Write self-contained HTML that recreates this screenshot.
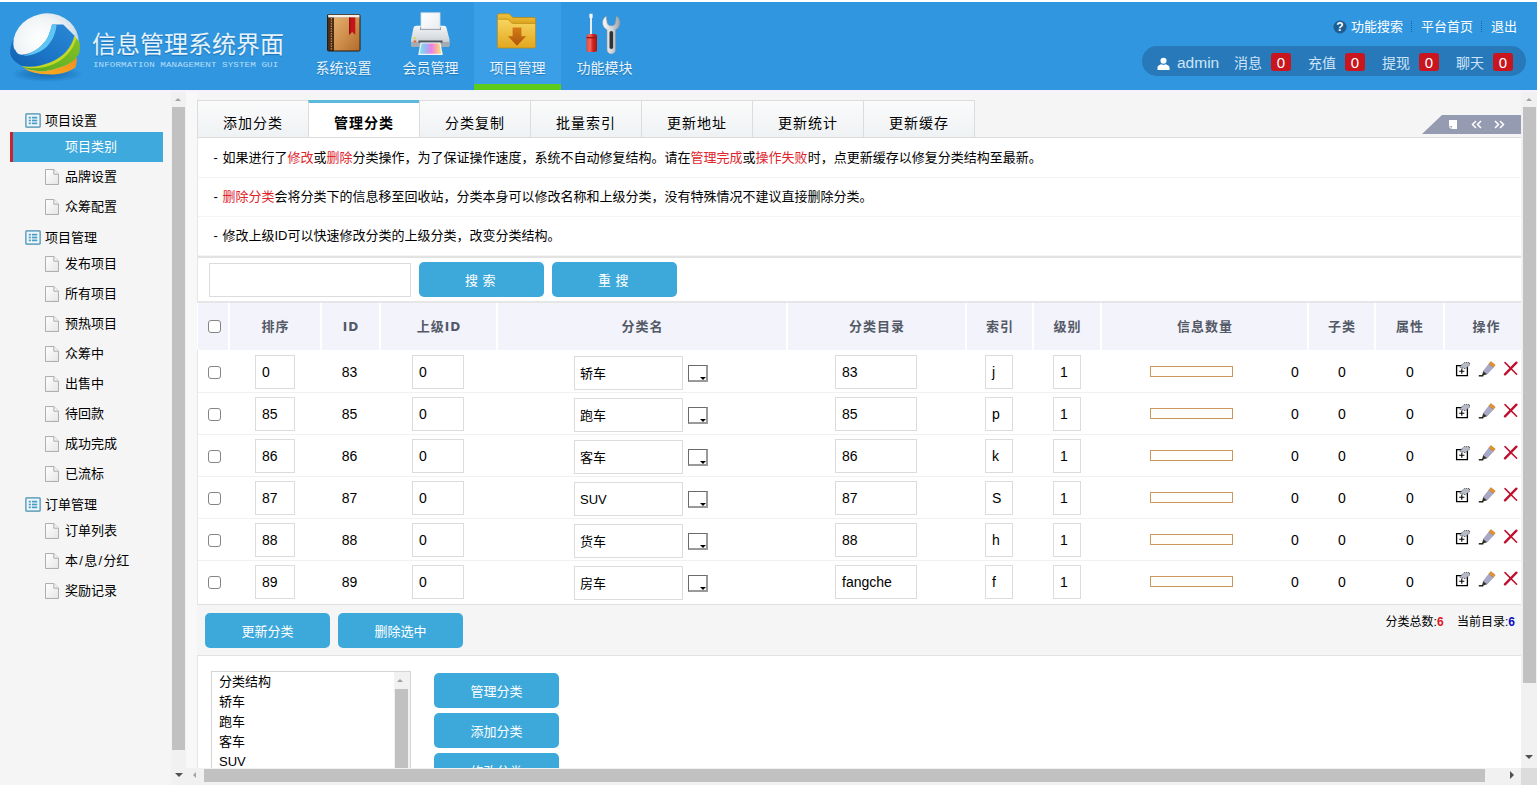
<!DOCTYPE html>
<html lang="zh-CN">
<head>
<meta charset="utf-8">
<title>信息管理系统界面</title>
<style>
*{box-sizing:border-box;margin:0;padding:0}
html,body{width:1537px;height:785px;overflow:hidden;background:#f5f5f5}
body{position:relative;font-family:"Liberation Sans","Noto Sans CJK SC",sans-serif;font-size:13px;color:#000}
.abs{position:absolute}
#hd{position:absolute;left:0;top:0;width:1537px;height:90px;background:#2f96df;border-top:2px solid #fff;overflow:hidden}
#strip{position:absolute;left:0;top:90px;width:1537px;height:2px;background:#f4f3fb}
#hd .title{position:absolute;left:92px;top:27px;font-size:24px;line-height:32px;color:#e6f3fd;font-weight:400;text-shadow:0 1px 1px rgba(20,90,150,.6);white-space:nowrap}
#hd .sub{position:absolute;left:93px;top:60px;font-family:"Liberation Mono","DejaVu Sans Mono",monospace;font-size:9.200px;line-height:10px;color:#b9def8;letter-spacing:.1px;white-space:nowrap;transform:scale(1,.74);transform-origin:0 0}
.nav{position:absolute;top:0;width:87px;height:88px;color:#eaf5fd;font-size:14px}
.nav span{position:absolute;left:0;width:87px;top:56px;line-height:20px;text-align:center;text-shadow:0 1px 1px rgba(20,90,150,.5)}
.nav.on{background:#3a9fe6}
.nav.on:after{content:"";position:absolute;left:0;bottom:0;width:87px;height:6px;background:#5ccb1b}
.nav svg{position:absolute}
.tl{position:absolute;top:16px;font-size:13px;line-height:18px;color:#fff;white-space:nowrap}
.sep{position:absolute;top:19px;width:0;height:11px;border-left:1px dotted #1b639e}
#pill{position:absolute;left:1142px;top:44px;width:384px;height:30px;border-radius:15px;background:#2779ba}
#pill .t{position:absolute;top:7px;line-height:20px;font-size:14px;color:#cfe5f7;white-space:nowrap}
#pill .b{position:absolute;top:7px;width:20px;height:18px;border-radius:3px;background:#c9151e;color:#fff;font-size:15px;line-height:19px;text-align:center}

#side{position:absolute;left:0;top:92px;width:186px;height:693px;background:#f5f5f5}
.gh{position:absolute;left:45px;font-size:13px;line-height:20px;color:#000;white-space:nowrap}
.gi{position:absolute;left:25px}
.it{position:absolute;left:65px;font-size:13px;line-height:20px;color:#000;white-space:nowrap}
.pi{position:absolute;left:45px}
#act{position:absolute;left:10px;top:132px;width:153px;height:30px;background:#3da9dc;border-left:3px solid #c9232d}
.sbt{position:absolute;background:#f1f1f1}
.sbth{position:absolute;background:#c1c1c1}
.au,.ad,.al,.ar{position:absolute;width:0;height:0;border:3.500px solid transparent}
.au{border-bottom:3.500px solid #a3a3a3;border-top:0}
.ad{border:4px solid transparent;border-top:4px solid #505050;border-bottom:0}
.al{border-right:3.500px solid #a3a3a3;border-left:0}
.ar{border:4px solid transparent;border-left:4px solid #505050;border-right:0}

#gap{position:absolute;left:186px;top:92px;width:11px;height:693px;background:#f8f8f8}
#main{position:absolute;left:197px;top:92px;width:1324px;height:676px;background:#f5f5f5;overflow:hidden}
#main .in{position:absolute;left:0;top:-92px;width:1324px;height:785px}
/* everything inside .in uses page coords minus 197 on x */
.tab{position:absolute;top:100px;width:112px;height:38px;border:1px solid #dcdcdc;background:linear-gradient(#fafbfb,#eff2f4);font-size:14px;letter-spacing:1px;line-height:20px;text-align:center;padding-top:12px;color:#000}
.tab.on{background:#fff;border-top:3px solid #5bb9dd;border-bottom-color:#fff;font-weight:bold;padding-top:10px}
#info{position:absolute;left:0;top:137px;width:1324px;height:120px;background:#fff;border-top:1px solid #dcdcdc;border-left:1px solid #e6e6e6}
.ir{position:absolute;left:0;width:1324px;height:39px;line-height:38px;padding-left:15.500px;font-size:13px;color:#000;white-space:nowrap;border-bottom:1px solid #f4f4f4}
.ir i{font-style:normal;color:#e0242c}
.ir u{text-decoration:none;display:inline-block;width:9px}
#srow{position:absolute;left:0;top:256px;width:1324px;height:47px;background:#fff;border-top:2px solid #e2e2e2;border-bottom:2px solid #e6e6e6;border-left:1px solid #e6e6e6}
.inp{position:absolute;background:#fff;border:1px solid #dcdcdc;font-size:13px;line-height:33px;padding-left:6px;color:#000;white-space:nowrap;overflow:hidden}
.btn{position:absolute;width:125px;height:35px;border-radius:5px;background:#3da9db;color:#fff;font-size:13px;line-height:37px;text-align:center;white-space:nowrap}
#thead{position:absolute;left:0;top:303px;width:1324px;height:47px;background:#fff}
.th{position:absolute;top:0;height:47px;background:#f3f3fc;font-size:13px;font-weight:bold;letter-spacing:1px;color:#535a66;text-align:center;line-height:48px;padding-left:1px}
#tbody{position:absolute;left:0;top:350px;width:1324px;height:255px;background:#fff;border-left:1px solid #e6e6e6;border-bottom:1px solid #e0e0e0}
.tr{position:absolute;left:0;width:1324px;height:43px;border-bottom:1px solid #f1f1f1}
.tr.last{border-bottom:0}
.td{position:absolute;font-size:14px;line-height:20px;color:#000;white-space:nowrap}
.cb{position:absolute;width:13px;height:13px;border:1px solid #858585;border-radius:3px;background:#fff}
.bar{position:absolute;width:83px;height:11px;border:1px solid #c8985c;background:#fffefb}
.sty{position:absolute;width:20px;height:17px;background:#fff;border-top:1px solid #6a6a6a;border-left:1px solid #6a6a6a;border-right:2px solid #9a9a9a;border-bottom:2px solid #9a9a9a}
.sty:after{content:"";position:absolute;right:0;bottom:0;width:0;height:0;border:3px solid transparent;border-top:3px solid #000;border-bottom:0}
#foot{position:absolute;left:0;top:605px;width:1324px;height:51px;background:#f5f5f5;border-bottom:1px solid #e2e2e2}
#bot{position:absolute;left:0;top:656px;width:1324px;height:120px;background:#fff;border-left:1px solid #e6e6e6}
.opt{position:absolute;left:7px;font-size:13px;line-height:20px;white-space:nowrap}
</style>
</head>
<body>
<div id="hd">
<svg class="abs" style="left:5px;top:5px" width="82" height="78" viewBox="0 0 82 78">
<defs>
<radialGradient id="lg1" cx="42%" cy="40%" r="62%"><stop offset="0" stop-color="#ffffff"/><stop offset=".55" stop-color="#f1f4f6"/><stop offset=".85" stop-color="#d5e3ec"/><stop offset="1" stop-color="#a9cbe3"/></radialGradient>
<linearGradient id="lg2" x1="1" y1="0" x2="0" y2="1"><stop offset="0" stop-color="#2a88d6"/><stop offset=".6" stop-color="#1b74c6"/><stop offset="1" stop-color="#135fae"/></linearGradient>
<linearGradient id="lg3" x1="0" y1="1" x2="1" y2="0"><stop offset="0" stop-color="#55aa22"/><stop offset="1" stop-color="#86c226"/></linearGradient>
<linearGradient id="lg4" x1="0" y1="1" x2="1" y2="0"><stop offset="0" stop-color="#f6b024"/><stop offset="1" stop-color="#f78c1c"/></linearGradient>
<radialGradient id="lgs" cx="50%" cy="50%" r="50%"><stop offset="0" stop-color="#0f5aa0" stop-opacity=".7"/><stop offset=".6" stop-color="#0f5aa0" stop-opacity=".35"/><stop offset="1" stop-color="#0f5aa0" stop-opacity="0"/></radialGradient>
</defs>
<ellipse cx="42" cy="67" rx="36" ry="8" fill="url(#lgs)"/>
<ellipse cx="41" cy="36.500" rx="33" ry="30" fill="url(#lg1)" transform="rotate(-12 41 36.500)"/>
<path d="M 71.5,50.0 L 71.8,51.5 C 71.8,55.0 71.2,58.0 70.4,60.2 C 64.0,65.0 55.0,67.5 46.0,67.5 C 39.0,67.5 33.0,66.7 28.6,65.5 C 24.0,64.2 21.0,62.6 18.4,60.4 C 22.0,62.0 27.0,63.5 33.7,64.3 C 39.0,64.5 45.0,63.5 52.0,61.2 C 60.0,59.5 67.0,56.0 71.5,50.0 Z" fill="url(#lg4)"/>
<path d="M 69.4,28.6 L 70.4,30.6 L 74.5,34.7 C 75.2,39.0 75.0,43.0 74.0,46.9 L 71.5,50.0 C 67.0,56.0 60.0,59.5 52.0,61.2 C 45.0,63.5 39.0,64.5 33.7,64.3 C 27.0,63.5 22.0,62.0 18.4,60.2 L 17.4,59.0 C 25.0,60.5 35.0,59.5 45.0,55.5 C 57.0,51.0 67.0,41.0 69.4,28.6 Z" fill="url(#lg3)"/>
<path d="M 69.4,28.6 L 71.3,31.5 C 68.5,43.5 58.5,53.5 46.5,58.0 C 36.5,61.5 26.5,62.0 18.4,60.2 L 17.4,59.0 C 25.0,60.5 35.0,59.5 45.0,55.5 C 57.0,51.0 67.0,41.0 69.4,28.6 Z" fill="#c3d821"/>
<path d="M 47.0,17.4 L 58.2,17.4 L 69.4,28.6 C 67.0,41.0 57.0,51.0 45.0,55.5 C 35.0,59.5 25.0,60.5 17.4,59.0 C 9.0,55.0 4.5,49.0 5.2,43.9 C 5.5,39.0 6.5,35.5 8.3,32.7 C 7.8,39.0 9.0,42.0 10.3,42.9 C 12.0,47.0 15.0,48.2 19.0,47.6 C 25.0,46.8 31.0,43.5 35.0,40.0 C 40.0,35.5 43.0,31.0 44.5,26.0 C 45.5,23.0 46.5,20.0 47.0,17.4 Z" fill="url(#lg2)"/>
<path d="M 47.0,17.4 L 51.5,17.8 C 51.0,26.0 47.5,34.0 41.5,40.0 C 35.0,45.5 27.0,49.0 18.0,49.0 C 25.0,47.0 31.0,43.5 35.0,40.0 C 40.0,35.5 43.0,31.0 44.5,26.0 C 45.5,23.0 46.5,20.0 47.0,17.4 Z" fill="#5ec6f4"/>
</svg>
<div class="title">信息管理系统界面</div>
<div class="sub">INFORMATION MANAGEMENT SYSTEM GUI</div>
<div class="nav" style="left:300px"><svg style="left:26px;top:11px" width="36" height="40" viewBox="0 0 36 40">
<defs><linearGradient id="bk1" x1="0" y1="0" x2="1" y2="1"><stop offset="0" stop-color="#e3ad6c"/><stop offset=".5" stop-color="#cf8f4c"/><stop offset="1" stop-color="#b06c2c"/></linearGradient></defs>
<rect x="1" y="1" width="33.500" height="37.500" rx="2" fill="#2b1a0d"/>
<rect x="2.200" y="1.800" width="31.300" height="3" fill="#f7f3ea"/>
<rect x="8" y="4.500" width="25.500" height="33" fill="url(#bk1)"/>
<rect x="2" y="4.500" width="6" height="33" fill="#4d2e15"/>
<path d="M5.300 5 v32" stroke="#c9a36e" stroke-width="1" stroke-dasharray="1.500 1"/>
<path d="M23 4.500 h6.300 v17.200 l-3.150 -2.600 l-3.150 2.600z" fill="#c4141a"/>
<path d="M23 4.500 h1.500 v16 l-1.500 1.200z" fill="#9e0d12"/>
</svg><span>系统设置</span></div>
<div class="nav" style="left:387px"><svg style="left:21px;top:8px" width="46" height="48" viewBox="0 0 46 48">
<defs>
<linearGradient id="pr1" x1="0" y1="0" x2="0" y2="1"><stop offset="0" stop-color="#f3f5f6"/><stop offset=".55" stop-color="#d9dde1"/><stop offset="1" stop-color="#b4bbc2"/></linearGradient>
<linearGradient id="pr2" x1="0" y1="0" x2="1" y2="0"><stop offset="0" stop-color="#7fe3ee"/><stop offset=".3" stop-color="#9fb4f2"/><stop offset=".55" stop-color="#f07fe6"/><stop offset=".8" stop-color="#f6b6a0"/><stop offset="1" stop-color="#f3e77c"/></linearGradient>
<linearGradient id="pr3" x1="0" y1="0" x2="1" y2="1"><stop offset="0" stop-color="#ffffff"/><stop offset="1" stop-color="#e9edf0"/></linearGradient>
</defs>
<path d="M8 15.800 h28 a2.500 2.500 0 0 1 2.400 1.800 l3.100 12 v5.400 a2 2 0 0 1 -2 2 h-34.500 a2 2 0 0 1 -2 -2 v-5.400 l2.600 -12 a2.500 2.500 0 0 1 2.400 -1.800z" fill="url(#pr1)"/>
<path d="M3 32 h38.500 v3 a2 2 0 0 1 -2 2 h-34.500 a2 2 0 0 1 -2 -2z" fill="#a3abb3"/>
<rect x="12" y="17" width="21" height="3" fill="#7d868e"/>
<rect x="13" y="2.800" width="19" height="16.200" fill="url(#pr3)" stroke="#d5dbe0" stroke-width=".8"/>
<rect x="10.500" y="30.500" width="24" height="2.200" fill="#4e565d"/>
<path d="M12.500 32.500 h20 l2.300 12.500 h-24.600z" fill="#f1f4f6"/>
<path d="M13.600 33.500 h17.800 l1.900 10.300 h-21.600z" fill="url(#pr2)"/>
<rect x="5.600" y="27.300" width="2.600" height="1.800" fill="#d8d840"/>
<rect x="5.600" y="30.500" width="2.600" height="1.800" fill="#f0602a"/>
</svg><span>会员管理</span></div>
<div class="nav on" style="left:474px"><svg style="left:22px;top:10px" width="42" height="38" viewBox="0 0 42 38">
<defs>
<linearGradient id="fd1" x1="0" y1="0" x2="0" y2="1"><stop offset="0" stop-color="#f8d560"/><stop offset="1" stop-color="#e2a71f"/></linearGradient>
<linearGradient id="fd0" x1="0" y1="0" x2="0" y2="1"><stop offset="0" stop-color="#f2c33c"/><stop offset="1" stop-color="#d89f1c"/></linearGradient>
<linearGradient id="fd2" x1="0" y1="0" x2="0" y2="1"><stop offset="0" stop-color="#d47c18"/><stop offset="1" stop-color="#b0560a"/></linearGradient>
</defs>
<path d="M1.500 3.300 a1.500 1.500 0 0 1 1.500 -1.500 h9.500 c2 0 3 3.700 5 3.700 h20.500 a1.500 1.500 0 0 1 1.500 1.500 v6 h-38z" fill="url(#fd0)" stroke="#b98a17" stroke-width=".8"/>
<path d="M1.500 8 c0 -.5 .5 -.8 1 -.8 h8.500 c2.500 0 3.500 4.200 6 4.200 h21 c1 0 1.500 .5 1.500 1.300 v21.800 a1.500 1.500 0 0 1 -1.500 1.500 h-35 a1.500 1.500 0 0 1 -1.500 -1.500z" fill="url(#fd1)" stroke="#bf8f18" stroke-width=".8"/>
<path d="M16.600 15.400 h8.800 v8.800 h4.700 l-9.100 9.600 l-9.100 -9.600 h4.700z" fill="url(#fd2)"/>
</svg><span>项目管理</span></div>
<div class="nav" style="left:561px"><svg style="left:23px;top:10px" width="40" height="42" viewBox="0 0 40 42">
<defs>
<linearGradient id="tl1" x1="0" y1="0" x2="1" y2="0"><stop offset="0" stop-color="#e8453c"/><stop offset=".35" stop-color="#f06a5e"/><stop offset=".6" stop-color="#d3241f"/><stop offset="1" stop-color="#a31512"/></linearGradient>
<linearGradient id="tl2" x1="0" y1="0" x2="1" y2="0"><stop offset="0" stop-color="#fafbfb"/><stop offset=".5" stop-color="#d3d8dc"/><stop offset="1" stop-color="#9aa2a9"/></linearGradient>
</defs>
<rect x="6" y="2" width="2" height="21" fill="#e9edf0"/>
<path d="M5.400 1.800 h3.200 v3.400 l-.6 1 h-2 l-.6 -1z" fill="#f4f6f7"/>
<rect x="2.500" y="22" width="10.500" height="18" rx="2.500" fill="url(#tl1)"/>
<rect x="2.500" y="25" width="10.500" height="1.300" fill="#9a1512"/>
<path d="M22.200 4 c-3 2 -4.200 5 -3.400 8.500 c.6 2.600 2.200 4.300 4.200 5.200 v20 a4.300 4.300 0 0 0 8.600 0 v-20 c2 -.9 3.600 -2.600 4.200 -5.200 c.8 -3.500 -.4 -6.500 -3.400 -8.500 l-1 6.800 c-.5 2 -1.700 3 -4.100 3 s-3.600 -1 -4.100 -3z" fill="url(#tl2)" stroke="#8b949b" stroke-width=".6"/>
<rect x="25.500" y="19" width="3.600" height="18" rx="1.800" fill="#2e3338"/>
</svg><span>功能模块</span></div>
<svg class="abs" style="left:1333px;top:18px" width="14" height="14" viewBox="0 0 14 14"><circle cx="7" cy="7" r="6.500" fill="#1e5c92"/><text x="7" y="11" font-family="Liberation Sans, sans-serif" font-size="12" font-weight="bold" fill="#fff" text-anchor="middle">?</text></svg>
<div class="tl" style="left:1351px">功能搜索</div>
<div class="sep" style="left:1411px"></div>
<div class="tl" style="left:1421px">平台首页</div>
<div class="sep" style="left:1481px"></div>
<div class="tl" style="left:1491px">退出</div>
<div id="pill">
<svg class="abs" style="left:14.500px;top:10.500px" width="13" height="13" viewBox="0 0 14 14"><circle cx="7" cy="4" r="3.300" fill="#fff"/><path d="M0.500 14 v-2.500 c0 -2.500 3 -3.500 4.500 -3.800 c1 .8 3 .8 4 0 c1.500 .3 4.500 1.300 4.500 3.800 v2.500z" fill="#fff"/></svg>
<div class="t" style="left:35px;font-size:15.500px;top:6.500px">admin</div>
<div class="t" style="left:92px">消息</div>
<div class="b" style="left:129px">0</div>
<div class="t" style="left:166px">充值</div>
<div class="b" style="left:203px">0</div>
<div class="t" style="left:240px">提现</div>
<div class="b" style="left:277px">0</div>
<div class="t" style="left:314px">聊天</div>
<div class="b" style="left:351px">0</div>
</div>
</div>
<div id="strip"></div>
<div id="side"></div>
<div class="sbt" style="left:171px;top:92px;width:15px;height:693px"></div>
<div class="sbth" style="left:172px;top:107px;width:13px;height:643px"></div>
<div class="au" style="left:175px;top:97.500px"></div>
<div class="ad" style="left:174.500px;top:773px"></div>
<div id="act"></div>
<svg class="gi" style="top:113px" width="16" height="15" viewBox="0 0 15 14"><rect x=".75" y=".75" width="13.500" height="12.500" rx="1.500" fill="#eef7fb" stroke="#74a9c4" stroke-width="1.700"/><rect x="3.500" y="3.500" width="2" height="1.600" fill="#4a9cc6"/><rect x="6.500" y="3.500" width="5" height="1.600" fill="#4a9cc6"/><rect x="3.500" y="6.200" width="2" height="1.600" fill="#4a9cc6"/><rect x="6.500" y="6.200" width="5" height="1.600" fill="#4a9cc6"/><rect x="3.500" y="8.900" width="2" height="1.600" fill="#4a9cc6"/><rect x="6.500" y="8.900" width="5" height="1.600" fill="#4a9cc6"/></svg>
<div class="gh" style="top:111px">项目设置</div>
<svg class="gi" style="top:230px" width="16" height="15" viewBox="0 0 15 14"><rect x=".75" y=".75" width="13.500" height="12.500" rx="1.500" fill="#eef7fb" stroke="#74a9c4" stroke-width="1.700"/><rect x="3.500" y="3.500" width="2" height="1.600" fill="#4a9cc6"/><rect x="6.500" y="3.500" width="5" height="1.600" fill="#4a9cc6"/><rect x="3.500" y="6.200" width="2" height="1.600" fill="#4a9cc6"/><rect x="6.500" y="6.200" width="5" height="1.600" fill="#4a9cc6"/><rect x="3.500" y="8.900" width="2" height="1.600" fill="#4a9cc6"/><rect x="6.500" y="8.900" width="5" height="1.600" fill="#4a9cc6"/></svg>
<div class="gh" style="top:228px">项目管理</div>
<svg class="gi" style="top:497px" width="16" height="15" viewBox="0 0 15 14"><rect x=".75" y=".75" width="13.500" height="12.500" rx="1.500" fill="#eef7fb" stroke="#74a9c4" stroke-width="1.700"/><rect x="3.500" y="3.500" width="2" height="1.600" fill="#4a9cc6"/><rect x="6.500" y="3.500" width="5" height="1.600" fill="#4a9cc6"/><rect x="3.500" y="6.200" width="2" height="1.600" fill="#4a9cc6"/><rect x="6.500" y="6.200" width="5" height="1.600" fill="#4a9cc6"/><rect x="3.500" y="8.900" width="2" height="1.600" fill="#4a9cc6"/><rect x="6.500" y="8.900" width="5" height="1.600" fill="#4a9cc6"/></svg>
<div class="gh" style="top:495px">订单管理</div>
<div class="it" style="top:137px;color:#fff">项目类别</div>
<svg class="pi" style="top:169px" width="14" height="16" viewBox="0 0 15 17"><defs><linearGradient id="pg1" x1="0" y1="0" x2="1" y2="1"><stop offset="0" stop-color="#ffffff"/><stop offset="1" stop-color="#e6e6e6"/></linearGradient></defs><path d="M.500 .500 h9 l5 5 v11 h-14z" fill="url(#pg1)" stroke="#a6a6a6" stroke-width="1"/><path d="M9.500 .500 v5 h5" fill="#f4f4f4" stroke="#a6a6a6" stroke-width="1"/></svg>
<div class="it" style="top:167px">品牌设置</div>
<svg class="pi" style="top:199px" width="14" height="16" viewBox="0 0 15 17"><defs><linearGradient id="pg2" x1="0" y1="0" x2="1" y2="1"><stop offset="0" stop-color="#ffffff"/><stop offset="1" stop-color="#e6e6e6"/></linearGradient></defs><path d="M.500 .500 h9 l5 5 v11 h-14z" fill="url(#pg2)" stroke="#a6a6a6" stroke-width="1"/><path d="M9.500 .500 v5 h5" fill="#f4f4f4" stroke="#a6a6a6" stroke-width="1"/></svg>
<div class="it" style="top:197px">众筹配置</div>
<svg class="pi" style="top:256px" width="14" height="16" viewBox="0 0 15 17"><defs><linearGradient id="pg3" x1="0" y1="0" x2="1" y2="1"><stop offset="0" stop-color="#ffffff"/><stop offset="1" stop-color="#e6e6e6"/></linearGradient></defs><path d="M.500 .500 h9 l5 5 v11 h-14z" fill="url(#pg3)" stroke="#a6a6a6" stroke-width="1"/><path d="M9.500 .500 v5 h5" fill="#f4f4f4" stroke="#a6a6a6" stroke-width="1"/></svg>
<div class="it" style="top:254px">发布项目</div>
<svg class="pi" style="top:286px" width="14" height="16" viewBox="0 0 15 17"><defs><linearGradient id="pg4" x1="0" y1="0" x2="1" y2="1"><stop offset="0" stop-color="#ffffff"/><stop offset="1" stop-color="#e6e6e6"/></linearGradient></defs><path d="M.500 .500 h9 l5 5 v11 h-14z" fill="url(#pg4)" stroke="#a6a6a6" stroke-width="1"/><path d="M9.500 .500 v5 h5" fill="#f4f4f4" stroke="#a6a6a6" stroke-width="1"/></svg>
<div class="it" style="top:284px">所有项目</div>
<svg class="pi" style="top:316px" width="14" height="16" viewBox="0 0 15 17"><defs><linearGradient id="pg5" x1="0" y1="0" x2="1" y2="1"><stop offset="0" stop-color="#ffffff"/><stop offset="1" stop-color="#e6e6e6"/></linearGradient></defs><path d="M.500 .500 h9 l5 5 v11 h-14z" fill="url(#pg5)" stroke="#a6a6a6" stroke-width="1"/><path d="M9.500 .500 v5 h5" fill="#f4f4f4" stroke="#a6a6a6" stroke-width="1"/></svg>
<div class="it" style="top:314px">预热项目</div>
<svg class="pi" style="top:346px" width="14" height="16" viewBox="0 0 15 17"><defs><linearGradient id="pg6" x1="0" y1="0" x2="1" y2="1"><stop offset="0" stop-color="#ffffff"/><stop offset="1" stop-color="#e6e6e6"/></linearGradient></defs><path d="M.500 .500 h9 l5 5 v11 h-14z" fill="url(#pg6)" stroke="#a6a6a6" stroke-width="1"/><path d="M9.500 .500 v5 h5" fill="#f4f4f4" stroke="#a6a6a6" stroke-width="1"/></svg>
<div class="it" style="top:344px">众筹中</div>
<svg class="pi" style="top:376px" width="14" height="16" viewBox="0 0 15 17"><defs><linearGradient id="pg7" x1="0" y1="0" x2="1" y2="1"><stop offset="0" stop-color="#ffffff"/><stop offset="1" stop-color="#e6e6e6"/></linearGradient></defs><path d="M.500 .500 h9 l5 5 v11 h-14z" fill="url(#pg7)" stroke="#a6a6a6" stroke-width="1"/><path d="M9.500 .500 v5 h5" fill="#f4f4f4" stroke="#a6a6a6" stroke-width="1"/></svg>
<div class="it" style="top:374px">出售中</div>
<svg class="pi" style="top:406px" width="14" height="16" viewBox="0 0 15 17"><defs><linearGradient id="pg8" x1="0" y1="0" x2="1" y2="1"><stop offset="0" stop-color="#ffffff"/><stop offset="1" stop-color="#e6e6e6"/></linearGradient></defs><path d="M.500 .500 h9 l5 5 v11 h-14z" fill="url(#pg8)" stroke="#a6a6a6" stroke-width="1"/><path d="M9.500 .500 v5 h5" fill="#f4f4f4" stroke="#a6a6a6" stroke-width="1"/></svg>
<div class="it" style="top:404px">待回款</div>
<svg class="pi" style="top:436px" width="14" height="16" viewBox="0 0 15 17"><defs><linearGradient id="pg9" x1="0" y1="0" x2="1" y2="1"><stop offset="0" stop-color="#ffffff"/><stop offset="1" stop-color="#e6e6e6"/></linearGradient></defs><path d="M.500 .500 h9 l5 5 v11 h-14z" fill="url(#pg9)" stroke="#a6a6a6" stroke-width="1"/><path d="M9.500 .500 v5 h5" fill="#f4f4f4" stroke="#a6a6a6" stroke-width="1"/></svg>
<div class="it" style="top:434px">成功完成</div>
<svg class="pi" style="top:466px" width="14" height="16" viewBox="0 0 15 17"><defs><linearGradient id="pg10" x1="0" y1="0" x2="1" y2="1"><stop offset="0" stop-color="#ffffff"/><stop offset="1" stop-color="#e6e6e6"/></linearGradient></defs><path d="M.500 .500 h9 l5 5 v11 h-14z" fill="url(#pg10)" stroke="#a6a6a6" stroke-width="1"/><path d="M9.500 .500 v5 h5" fill="#f4f4f4" stroke="#a6a6a6" stroke-width="1"/></svg>
<div class="it" style="top:464px">已流标</div>
<svg class="pi" style="top:523px" width="14" height="16" viewBox="0 0 15 17"><defs><linearGradient id="pg11" x1="0" y1="0" x2="1" y2="1"><stop offset="0" stop-color="#ffffff"/><stop offset="1" stop-color="#e6e6e6"/></linearGradient></defs><path d="M.500 .500 h9 l5 5 v11 h-14z" fill="url(#pg11)" stroke="#a6a6a6" stroke-width="1"/><path d="M9.500 .500 v5 h5" fill="#f4f4f4" stroke="#a6a6a6" stroke-width="1"/></svg>
<div class="it" style="top:521px">订单列表</div>
<svg class="pi" style="top:553px" width="14" height="16" viewBox="0 0 15 17"><defs><linearGradient id="pg12" x1="0" y1="0" x2="1" y2="1"><stop offset="0" stop-color="#ffffff"/><stop offset="1" stop-color="#e6e6e6"/></linearGradient></defs><path d="M.500 .500 h9 l5 5 v11 h-14z" fill="url(#pg12)" stroke="#a6a6a6" stroke-width="1"/><path d="M9.500 .500 v5 h5" fill="#f4f4f4" stroke="#a6a6a6" stroke-width="1"/></svg>
<div class="it" style="top:551px">本<span style="padding:0 1.250px">/</span>息<span style="padding:0 1.250px">/</span>分红</div>
<svg class="pi" style="top:583px" width="14" height="16" viewBox="0 0 15 17"><defs><linearGradient id="pg13" x1="0" y1="0" x2="1" y2="1"><stop offset="0" stop-color="#ffffff"/><stop offset="1" stop-color="#e6e6e6"/></linearGradient></defs><path d="M.500 .500 h9 l5 5 v11 h-14z" fill="url(#pg13)" stroke="#a6a6a6" stroke-width="1"/><path d="M9.500 .500 v5 h5" fill="#f4f4f4" stroke="#a6a6a6" stroke-width="1"/></svg>
<div class="it" style="top:581px">奖励记录</div>
<div id="gap"></div>
<div id="main"><div class="in">
<div class="tab" style="left:0px">添加分类</div>
<div class="tab on" style="left:111px">管理分类</div>
<div class="tab" style="left:222px">分类复制</div>
<div class="tab" style="left:333px">批量索引</div>
<div class="tab" style="left:444px">更新地址</div>
<div class="tab" style="left:555px">更新统计</div>
<div class="tab" style="left:666px">更新缓存</div>
<svg class="abs" style="left:1225px;top:115px" width="100" height="19" viewBox="0 0 100 19"><path d="M0 19 L20 0 H98 a2 2 0 0 1 2 2 V19z" fill="#959cb1"/><path d="M27 5 h8 v9 h-5 v-3 h-3z" fill="#fff"/><path d="M27 12 h2 v2" fill="none" stroke="#fff" stroke-width="1"/><path d="M54 6 l-3.500 3.500 l3.500 3.500 M59 6 l-3.500 3.500 l3.500 3.500" fill="none" stroke="#fff" stroke-width="1.500"/><path d="M73 6 l3.500 3.500 l-3.500 3.500 M78 6 l3.500 3.500 l-3.500 3.500" fill="none" stroke="#fff" stroke-width="1.500"/></svg>
<div id="info">
<div class="ir" style="top:1px"><u>-</u>如果进行了<i>修改</i>或<i>删除</i>分类操作，为了保证操作速度，系统不自动修复结构。请在<i>管理完成</i>或<i>操作失败</i>时，点更新缓存以修复分类结构至最新。</div>
<div class="ir" style="top:40px"><u>-</u><i>删除分类</i>会将分类下的信息移至回收站，分类本身可以修改名称和上级分类，没有特殊情况不建议直接删除分类。</div>
<div class="ir" style="top:79px"><u>-</u>修改上级ID可以快速修改分类的上级分类，改变分类结构。</div>
</div>
<div id="srow"></div>
<div class="inp" style="left:12px;top:263px;width:202px;height:34px"></div>
<div class="btn" style="left:222px;top:262px;letter-spacing:4.600px;padding-left:2px">搜索</div>
<div class="btn" style="left:355px;top:262px;letter-spacing:4.600px;padding-left:2px">重搜</div>
<div id="thead">
<div class="th" style="left:1px;width:30px"></div>
<div class="th" style="left:33px;width:90px">排序</div>
<div class="th" style="left:125px;width:57px"><span style="font-family:DejaVu Sans,sans-serif;font-size:12px">ID</span></div>
<div class="th" style="left:184px;width:115px">上级<span style="font-family:DejaVu Sans,sans-serif;font-size:12px">ID</span></div>
<div class="th" style="left:301px;width:288px">分类名</div>
<div class="th" style="left:591px;width:177px">分类目录</div>
<div class="th" style="left:770px;width:65px">索引</div>
<div class="th" style="left:837px;width:66px">级别</div>
<div class="th" style="left:905px;width:205px">信息数量</div>
<div class="th" style="left:1112px;width:65px">子类</div>
<div class="th" style="left:1179px;width:67px">属性</div>
<div class="th" style="left:1248px;width:82px">操作</div>
<div class="cb" style="left:11px;top:17px"></div>
</div>
<div id="tbody">
<div class="tr" style="top:0px">
<div class="cb" style="left:10px;top:16px"></div>
<div class="inp" style="left:57px;top:5px;width:40px;height:34px;font-size:14px">0</div>
<div class="td" style="left:123px;top:12px;width:57px;text-align:center">83</div>
<div class="inp" style="left:214px;top:5px;width:52px;height:34px;font-size:14px">0</div>
<div class="inp" style="left:376px;top:6px;width:109px;height:34px;font-size:13px;line-height:33px;padding-left:5px">轿车</div>
<div class="sty" style="left:490px;top:15px"></div>
<div class="inp" style="left:637px;top:5px;width:82px;height:34px;font-size:14px">83</div>
<div class="inp" style="left:787px;top:5px;width:28px;height:34px;font-size:14px">j</div>
<div class="inp" style="left:855px;top:5px;width:28px;height:34px;font-size:14px">1</div>
<div class="bar" style="left:952px;top:16px"></div>
<div class="td" style="left:1087px;top:12px;width:20px;text-align:center">0</div>
<div class="td" style="left:1134px;top:12px;width:20px;text-align:center">0</div>
<div class="td" style="left:1202px;top:12px;width:20px;text-align:center">0</div>
<svg class="abs" style="left:1257px;top:11px" width="16" height="16" viewBox="0 0 16 16"><path d="M1.600 4.600 h10.800 v10 h-10.800z" fill="#fff" stroke="#000" stroke-width="1.300"/><path d="M4.500 6 L9.300 1.600 h5.200 v2.600 l-4 3.600z" fill="#b7bac8" stroke="#3c3c3c" stroke-width=".8" stroke-dasharray="1.200 .800"/><path d="M6.800 7.600 v5.200 M4.200 10.200 h5.200" stroke="#000" stroke-width="1.100" fill="none"/></svg>
<svg class="abs" style="left:1280px;top:11px" width="18" height="16" viewBox="0 0 18 16"><path d="M12.800 .600 L17.200 3.900 L15.200 6.500 L10.800 3.200z" fill="#e8922a" stroke="#a86a18" stroke-width=".5"/><path d="M10.800 3.200 L15.200 6.500 L9 13.200 L5.200 10.300z" fill="#a8a8c8" stroke="#8686a6" stroke-width=".5"/><path d="M5.200 10.300 L9 13.200 L3.800 15z" fill="#33331f"/><path d="M.800 14.800 h4.500" stroke="#111" stroke-width="1.400"/></svg>
<svg class="abs" style="left:1305px;top:11px" width="15" height="15" viewBox="0 0 15 15"><path d="M2 1.600 L13.600 13.200" stroke="#be0f2d" stroke-width="1.500" stroke-linecap="round"/><path d="M13.400 1.600 L2 13.400" stroke="#be0f2d" stroke-width="2.300" stroke-linecap="round"/></svg>
</div>
<div class="tr" style="top:42px">
<div class="cb" style="left:10px;top:16px"></div>
<div class="inp" style="left:57px;top:5px;width:40px;height:34px;font-size:14px">85</div>
<div class="td" style="left:123px;top:12px;width:57px;text-align:center">85</div>
<div class="inp" style="left:214px;top:5px;width:52px;height:34px;font-size:14px">0</div>
<div class="inp" style="left:376px;top:6px;width:109px;height:34px;font-size:13px;line-height:33px;padding-left:5px">跑车</div>
<div class="sty" style="left:490px;top:15px"></div>
<div class="inp" style="left:637px;top:5px;width:82px;height:34px;font-size:14px">85</div>
<div class="inp" style="left:787px;top:5px;width:28px;height:34px;font-size:14px">p</div>
<div class="inp" style="left:855px;top:5px;width:28px;height:34px;font-size:14px">1</div>
<div class="bar" style="left:952px;top:16px"></div>
<div class="td" style="left:1087px;top:12px;width:20px;text-align:center">0</div>
<div class="td" style="left:1134px;top:12px;width:20px;text-align:center">0</div>
<div class="td" style="left:1202px;top:12px;width:20px;text-align:center">0</div>
<svg class="abs" style="left:1257px;top:11px" width="16" height="16" viewBox="0 0 16 16"><path d="M1.600 4.600 h10.800 v10 h-10.800z" fill="#fff" stroke="#000" stroke-width="1.300"/><path d="M4.500 6 L9.300 1.600 h5.200 v2.600 l-4 3.600z" fill="#b7bac8" stroke="#3c3c3c" stroke-width=".8" stroke-dasharray="1.200 .800"/><path d="M6.800 7.600 v5.200 M4.200 10.200 h5.200" stroke="#000" stroke-width="1.100" fill="none"/></svg>
<svg class="abs" style="left:1280px;top:11px" width="18" height="16" viewBox="0 0 18 16"><path d="M12.800 .600 L17.200 3.900 L15.200 6.500 L10.800 3.200z" fill="#e8922a" stroke="#a86a18" stroke-width=".5"/><path d="M10.800 3.200 L15.200 6.500 L9 13.200 L5.200 10.300z" fill="#a8a8c8" stroke="#8686a6" stroke-width=".5"/><path d="M5.200 10.300 L9 13.200 L3.800 15z" fill="#33331f"/><path d="M.800 14.800 h4.500" stroke="#111" stroke-width="1.400"/></svg>
<svg class="abs" style="left:1305px;top:11px" width="15" height="15" viewBox="0 0 15 15"><path d="M2 1.600 L13.600 13.200" stroke="#be0f2d" stroke-width="1.500" stroke-linecap="round"/><path d="M13.400 1.600 L2 13.400" stroke="#be0f2d" stroke-width="2.300" stroke-linecap="round"/></svg>
</div>
<div class="tr" style="top:84px">
<div class="cb" style="left:10px;top:16px"></div>
<div class="inp" style="left:57px;top:5px;width:40px;height:34px;font-size:14px">86</div>
<div class="td" style="left:123px;top:12px;width:57px;text-align:center">86</div>
<div class="inp" style="left:214px;top:5px;width:52px;height:34px;font-size:14px">0</div>
<div class="inp" style="left:376px;top:6px;width:109px;height:34px;font-size:13px;line-height:33px;padding-left:5px">客车</div>
<div class="sty" style="left:490px;top:15px"></div>
<div class="inp" style="left:637px;top:5px;width:82px;height:34px;font-size:14px">86</div>
<div class="inp" style="left:787px;top:5px;width:28px;height:34px;font-size:14px">k</div>
<div class="inp" style="left:855px;top:5px;width:28px;height:34px;font-size:14px">1</div>
<div class="bar" style="left:952px;top:16px"></div>
<div class="td" style="left:1087px;top:12px;width:20px;text-align:center">0</div>
<div class="td" style="left:1134px;top:12px;width:20px;text-align:center">0</div>
<div class="td" style="left:1202px;top:12px;width:20px;text-align:center">0</div>
<svg class="abs" style="left:1257px;top:11px" width="16" height="16" viewBox="0 0 16 16"><path d="M1.600 4.600 h10.800 v10 h-10.800z" fill="#fff" stroke="#000" stroke-width="1.300"/><path d="M4.500 6 L9.300 1.600 h5.200 v2.600 l-4 3.600z" fill="#b7bac8" stroke="#3c3c3c" stroke-width=".8" stroke-dasharray="1.200 .800"/><path d="M6.800 7.600 v5.200 M4.200 10.200 h5.200" stroke="#000" stroke-width="1.100" fill="none"/></svg>
<svg class="abs" style="left:1280px;top:11px" width="18" height="16" viewBox="0 0 18 16"><path d="M12.800 .600 L17.200 3.900 L15.200 6.500 L10.800 3.200z" fill="#e8922a" stroke="#a86a18" stroke-width=".5"/><path d="M10.800 3.200 L15.200 6.500 L9 13.200 L5.200 10.300z" fill="#a8a8c8" stroke="#8686a6" stroke-width=".5"/><path d="M5.200 10.300 L9 13.200 L3.800 15z" fill="#33331f"/><path d="M.800 14.800 h4.500" stroke="#111" stroke-width="1.400"/></svg>
<svg class="abs" style="left:1305px;top:11px" width="15" height="15" viewBox="0 0 15 15"><path d="M2 1.600 L13.600 13.200" stroke="#be0f2d" stroke-width="1.500" stroke-linecap="round"/><path d="M13.400 1.600 L2 13.400" stroke="#be0f2d" stroke-width="2.300" stroke-linecap="round"/></svg>
</div>
<div class="tr" style="top:126px">
<div class="cb" style="left:10px;top:16px"></div>
<div class="inp" style="left:57px;top:5px;width:40px;height:34px;font-size:14px">87</div>
<div class="td" style="left:123px;top:12px;width:57px;text-align:center">87</div>
<div class="inp" style="left:214px;top:5px;width:52px;height:34px;font-size:14px">0</div>
<div class="inp" style="left:376px;top:6px;width:109px;height:34px;font-size:13px;line-height:33px;padding-left:5px">SUV</div>
<div class="sty" style="left:490px;top:15px"></div>
<div class="inp" style="left:637px;top:5px;width:82px;height:34px;font-size:14px">87</div>
<div class="inp" style="left:787px;top:5px;width:28px;height:34px;font-size:14px">S</div>
<div class="inp" style="left:855px;top:5px;width:28px;height:34px;font-size:14px">1</div>
<div class="bar" style="left:952px;top:16px"></div>
<div class="td" style="left:1087px;top:12px;width:20px;text-align:center">0</div>
<div class="td" style="left:1134px;top:12px;width:20px;text-align:center">0</div>
<div class="td" style="left:1202px;top:12px;width:20px;text-align:center">0</div>
<svg class="abs" style="left:1257px;top:11px" width="16" height="16" viewBox="0 0 16 16"><path d="M1.600 4.600 h10.800 v10 h-10.800z" fill="#fff" stroke="#000" stroke-width="1.300"/><path d="M4.500 6 L9.300 1.600 h5.200 v2.600 l-4 3.600z" fill="#b7bac8" stroke="#3c3c3c" stroke-width=".8" stroke-dasharray="1.200 .800"/><path d="M6.800 7.600 v5.200 M4.200 10.200 h5.200" stroke="#000" stroke-width="1.100" fill="none"/></svg>
<svg class="abs" style="left:1280px;top:11px" width="18" height="16" viewBox="0 0 18 16"><path d="M12.800 .600 L17.200 3.900 L15.200 6.500 L10.800 3.200z" fill="#e8922a" stroke="#a86a18" stroke-width=".5"/><path d="M10.800 3.200 L15.200 6.500 L9 13.200 L5.200 10.300z" fill="#a8a8c8" stroke="#8686a6" stroke-width=".5"/><path d="M5.200 10.300 L9 13.200 L3.800 15z" fill="#33331f"/><path d="M.800 14.800 h4.500" stroke="#111" stroke-width="1.400"/></svg>
<svg class="abs" style="left:1305px;top:11px" width="15" height="15" viewBox="0 0 15 15"><path d="M2 1.600 L13.600 13.200" stroke="#be0f2d" stroke-width="1.500" stroke-linecap="round"/><path d="M13.400 1.600 L2 13.400" stroke="#be0f2d" stroke-width="2.300" stroke-linecap="round"/></svg>
</div>
<div class="tr" style="top:168px">
<div class="cb" style="left:10px;top:16px"></div>
<div class="inp" style="left:57px;top:5px;width:40px;height:34px;font-size:14px">88</div>
<div class="td" style="left:123px;top:12px;width:57px;text-align:center">88</div>
<div class="inp" style="left:214px;top:5px;width:52px;height:34px;font-size:14px">0</div>
<div class="inp" style="left:376px;top:6px;width:109px;height:34px;font-size:13px;line-height:33px;padding-left:5px">货车</div>
<div class="sty" style="left:490px;top:15px"></div>
<div class="inp" style="left:637px;top:5px;width:82px;height:34px;font-size:14px">88</div>
<div class="inp" style="left:787px;top:5px;width:28px;height:34px;font-size:14px">h</div>
<div class="inp" style="left:855px;top:5px;width:28px;height:34px;font-size:14px">1</div>
<div class="bar" style="left:952px;top:16px"></div>
<div class="td" style="left:1087px;top:12px;width:20px;text-align:center">0</div>
<div class="td" style="left:1134px;top:12px;width:20px;text-align:center">0</div>
<div class="td" style="left:1202px;top:12px;width:20px;text-align:center">0</div>
<svg class="abs" style="left:1257px;top:11px" width="16" height="16" viewBox="0 0 16 16"><path d="M1.600 4.600 h10.800 v10 h-10.800z" fill="#fff" stroke="#000" stroke-width="1.300"/><path d="M4.500 6 L9.300 1.600 h5.200 v2.600 l-4 3.600z" fill="#b7bac8" stroke="#3c3c3c" stroke-width=".8" stroke-dasharray="1.200 .800"/><path d="M6.800 7.600 v5.200 M4.200 10.200 h5.200" stroke="#000" stroke-width="1.100" fill="none"/></svg>
<svg class="abs" style="left:1280px;top:11px" width="18" height="16" viewBox="0 0 18 16"><path d="M12.800 .600 L17.200 3.900 L15.200 6.500 L10.800 3.200z" fill="#e8922a" stroke="#a86a18" stroke-width=".5"/><path d="M10.800 3.200 L15.200 6.500 L9 13.200 L5.200 10.300z" fill="#a8a8c8" stroke="#8686a6" stroke-width=".5"/><path d="M5.200 10.300 L9 13.200 L3.800 15z" fill="#33331f"/><path d="M.800 14.800 h4.500" stroke="#111" stroke-width="1.400"/></svg>
<svg class="abs" style="left:1305px;top:11px" width="15" height="15" viewBox="0 0 15 15"><path d="M2 1.600 L13.600 13.200" stroke="#be0f2d" stroke-width="1.500" stroke-linecap="round"/><path d="M13.400 1.600 L2 13.400" stroke="#be0f2d" stroke-width="2.300" stroke-linecap="round"/></svg>
</div>
<div class="tr last" style="top:210px">
<div class="cb" style="left:10px;top:16px"></div>
<div class="inp" style="left:57px;top:5px;width:40px;height:34px;font-size:14px">89</div>
<div class="td" style="left:123px;top:12px;width:57px;text-align:center">89</div>
<div class="inp" style="left:214px;top:5px;width:52px;height:34px;font-size:14px">0</div>
<div class="inp" style="left:376px;top:6px;width:109px;height:34px;font-size:13px;line-height:33px;padding-left:5px">房车</div>
<div class="sty" style="left:490px;top:15px"></div>
<div class="inp" style="left:637px;top:5px;width:82px;height:34px;font-size:14px">fangche</div>
<div class="inp" style="left:787px;top:5px;width:28px;height:34px;font-size:14px">f</div>
<div class="inp" style="left:855px;top:5px;width:28px;height:34px;font-size:14px">1</div>
<div class="bar" style="left:952px;top:16px"></div>
<div class="td" style="left:1087px;top:12px;width:20px;text-align:center">0</div>
<div class="td" style="left:1134px;top:12px;width:20px;text-align:center">0</div>
<div class="td" style="left:1202px;top:12px;width:20px;text-align:center">0</div>
<svg class="abs" style="left:1257px;top:11px" width="16" height="16" viewBox="0 0 16 16"><path d="M1.600 4.600 h10.800 v10 h-10.800z" fill="#fff" stroke="#000" stroke-width="1.300"/><path d="M4.500 6 L9.300 1.600 h5.200 v2.600 l-4 3.600z" fill="#b7bac8" stroke="#3c3c3c" stroke-width=".8" stroke-dasharray="1.200 .800"/><path d="M6.800 7.600 v5.200 M4.200 10.200 h5.200" stroke="#000" stroke-width="1.100" fill="none"/></svg>
<svg class="abs" style="left:1280px;top:11px" width="18" height="16" viewBox="0 0 18 16"><path d="M12.800 .600 L17.200 3.900 L15.200 6.500 L10.800 3.200z" fill="#e8922a" stroke="#a86a18" stroke-width=".5"/><path d="M10.800 3.200 L15.200 6.500 L9 13.200 L5.200 10.300z" fill="#a8a8c8" stroke="#8686a6" stroke-width=".5"/><path d="M5.200 10.300 L9 13.200 L3.800 15z" fill="#33331f"/><path d="M.800 14.800 h4.500" stroke="#111" stroke-width="1.400"/></svg>
<svg class="abs" style="left:1305px;top:11px" width="15" height="15" viewBox="0 0 15 15"><path d="M2 1.600 L13.600 13.200" stroke="#be0f2d" stroke-width="1.500" stroke-linecap="round"/><path d="M13.400 1.600 L2 13.400" stroke="#be0f2d" stroke-width="2.300" stroke-linecap="round"/></svg>
</div>
</div>
<div id="foot"></div>
<div class="btn" style="left:8px;top:613px">更新分类</div>
<div class="btn" style="left:141px;top:613px">删除选中</div>
<div class="abs" style="left:1103px;top:612px;width:215px;text-align:right;font-size:12px;line-height:20px;white-space:nowrap">分类总数:<b style="color:#e01422">6</b>&nbsp;&nbsp;&nbsp;&nbsp;当前目录:<b style="color:#0c0cc4">6</b></div>
<div id="bot">
<div class="abs" style="left:13px;top:15px;width:200px;height:110px;border:1px solid #d4d4d4;background:#fff">
<div class="opt" style="top:0px">分类结构</div>
<div class="opt" style="top:20px">轿车</div>
<div class="opt" style="top:40px">跑车</div>
<div class="opt" style="top:60px">客车</div>
<div class="opt" style="top:80px">SUV</div>
<div class="sbt" style="left:182px;top:0;width:16px;height:110px"></div>
<div class="sbth" style="left:183px;top:17px;width:13px;height:100px"></div>
<div class="au" style="left:185px;top:7px;border-bottom-color:#a0a0a0"></div>
</div>
<div class="btn" style="left:236px;top:17px">管理分类</div>
<div class="btn" style="left:236px;top:57px">添加分类</div>
<div class="btn" style="left:236px;top:97px">修改分类</div>
</div>
</div></div>
<div class="sbt" style="left:1521px;top:92px;width:16px;height:693px"></div>
<div class="sbth" style="left:1523px;top:107px;width:13px;height:576px"></div>
<div class="au" style="left:1525.500px;top:97.500px"></div>
<div class="ad" style="left:1525px;top:755px"></div>
<div class="sbt" style="left:186px;top:768px;width:1335px;height:17px"></div>
<div class="sbth" style="left:204px;top:769px;width:1281px;height:13px"></div>
<div class="al" style="left:192.500px;top:771.500px"></div>
<div class="ar" style="left:1510px;top:771px"></div>
<div class="abs" style="left:1521px;top:768px;width:16px;height:17px;background:#dcdcdc"></div>
</body>
</html>
